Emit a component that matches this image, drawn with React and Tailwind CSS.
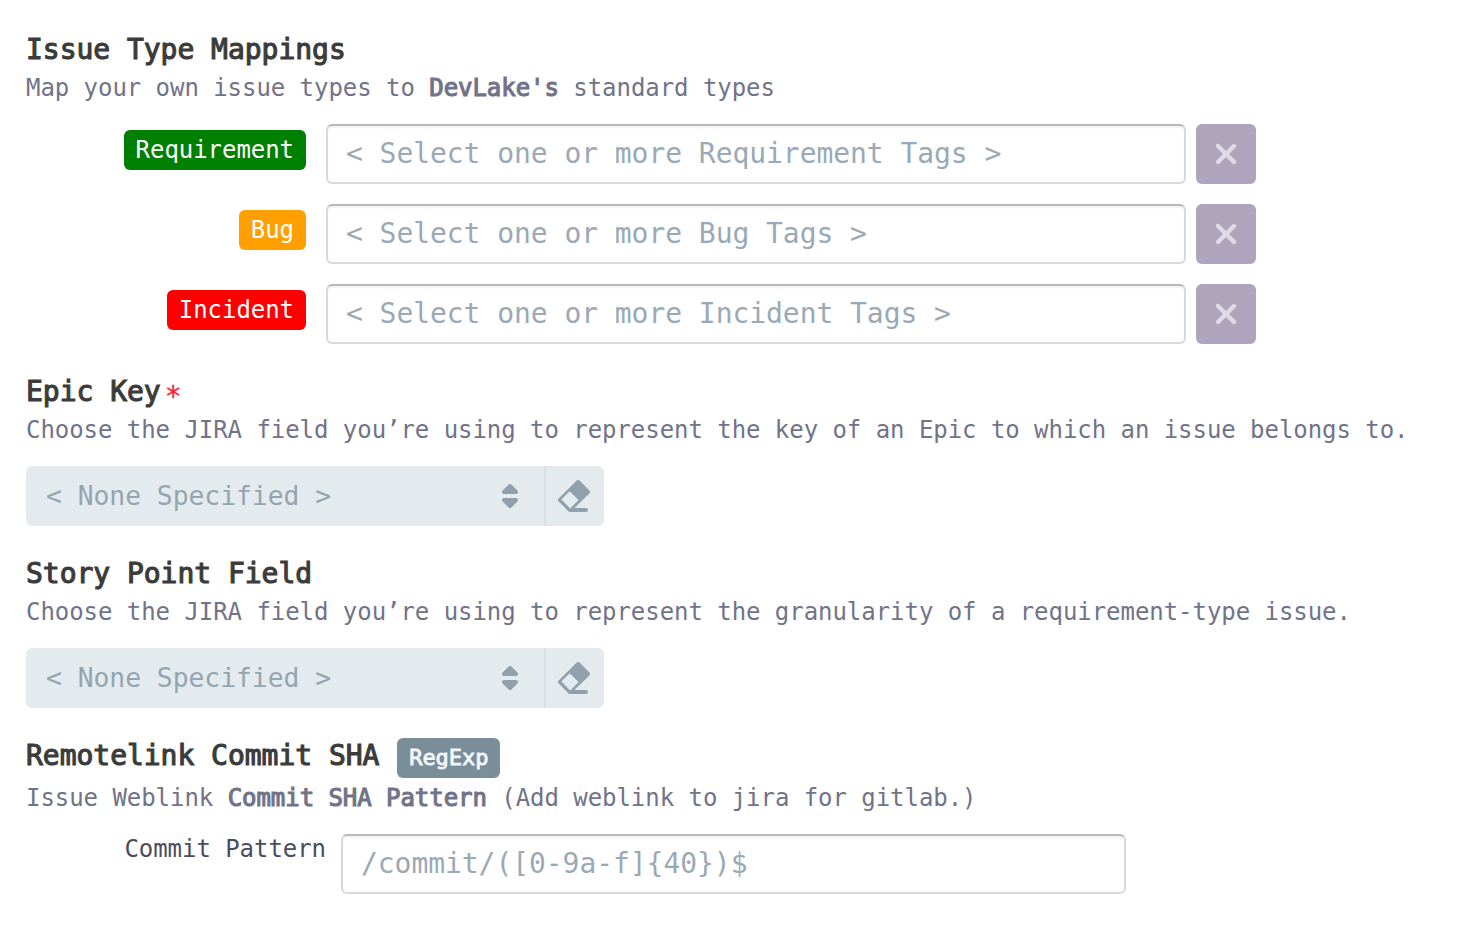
import React from "react";

function CrossIcon() {
  return (
    <svg width="32" height="32" viewBox="0 0 16 16" fill="#dfdbe5" stroke="#dfdbe5" strokeWidth="0.2">
      <path d="M9.41 8l3.29-3.29c.19-.18.3-.43.3-.71a1.003 1.003 0 00-1.71-.71L8 6.59l-3.29-3.3a1.003 1.003 0 00-1.42 1.42L6.59 8 3.3 11.29c-.19.18-.3.43-.3.71a1.003 1.003 0 001.71.71L8 9.41l3.29 3.29c.18.19.43.3.71.3a1.003 1.003 0 00.71-1.71L9.41 8z" />
    </svg>
  );
}

function CaretsIcon() {
  return (
    <svg width="32" height="32" viewBox="0 0 16 16" fill="#90a1ad">
      <path d="M5 7h6a1.003 1.003 0 00.71-1.71l-3-3C8.53 2.11 8.28 2 8 2s-.53.11-.71.29l-3 3A1.003 1.003 0 005 7zm6 2H5a1.003 1.003 0 00-.71 1.71l3 3c.18.18.43.29.71.29s.53-.11.71-.29l3-3A1.003 1.003 0 0011 9z" />
    </svg>
  );
}

function EraserIcon() {
  return (
    <svg width="32" height="32" viewBox="0 0 16 16" fill="#90a1ad" fillRule="evenodd">
      <path d="M9.4.3L.3 9.2a1 1 0 000 1.42l5 5.08c.18.18.43.3.7.3h8a1 1 0 000-2H8.2l7.5-7.3a1 1 0 000-1.42L10.8.3a1 1 0 00-1.4 0zM5.85 5.65l4.4 4.4L6.1 14.2 1.7 9.8z" />
    </svg>
  );
}

function Heading({ children }) {
  return (
    <h2 className="h-9 text-[28px] leading-9 tracking-[-0.03px] text-[#3b3b3b] whitespace-pre [-webkit-text-stroke:1.1px_#3b3b3b]">
      {children}
    </h2>
  );
}

function Strong({ children }) {
  return <span className="[-webkit-text-stroke:1.1px_#717389]">{children}</span>;
}

function Description({ children }) {
  return (
    <p className="h-8 text-2xl leading-8 tracking-[-0.048px] text-[#717389] whitespace-nowrap">{children}</p>
  );
}

const inputClass =
  "h-[60px] rounded-md border-2 border-[#d9d9d9] border-t-[#b9b9b9] bg-white pl-[18px] pb-0.5 text-[28px] tracking-[-0.056px] placeholder:text-[#9aa9b5] placeholder:opacity-100 shadow-[inset_0_2px_2px_rgba(16,22,26,0.05)] outline-none";

const mappings = [
  { name: "Requirement", color: "bg-[#008000]" },
  { name: "Bug", color: "bg-[#ffa000]" },
  { name: "Incident", color: "bg-[#ff0000]" },
];

function MappingRow({ name, color }) {
  return (
    <div className="flex">
      <div className="flex w-[280px] justify-end pt-1.5">
        <span className={"h-10 rounded-md px-3 text-2xl leading-10 tracking-[-0.048px] text-white " + color}>
          {name}
        </span>
      </div>
      <input
        className={"ml-5 w-[860px] " + inputClass}
        placeholder={"< Select one or more " + name + " Tags >"}
      />
      <button className="ml-2.5 flex h-[60px] w-[60px] items-center justify-center rounded-md bg-[#aea5bd]">
        <CrossIcon />
      </button>
    </div>
  );
}

function FieldSelect() {
  return (
    <div className="mt-5 flex h-[60px] w-[578px] overflow-hidden rounded-md bg-[#e3ebee]">
      <button className="flex w-[518px] items-center justify-between pl-5 pr-[18px] text-[26.4px] leading-8 tracking-[-0.053px] text-[#94a5b1]">
        <span>{"< None Specified >"}</span>
        <CaretsIcon />
      </button>
      <button className="flex w-[60px] items-center justify-center border-l-2 border-[#d5e0e7] pr-0.5">
        <EraserIcon />
      </button>
    </div>
  );
}

export default function App() {
  return (
    <main className="h-[938px] w-[1464px] overflow-hidden bg-white pl-[26px] pt-8 font-['DejaVu_Sans_Mono',monospace]">
      <section>
        <Heading>Issue Type Mappings</Heading>
        <div className="mt-1">
          <Description>
            Map your own issue types to <Strong>DevLake's</Strong> standard types
          </Description>
        </div>
        <div className="mt-5 flex flex-col gap-5">
          {mappings.map((m) => (
            <MappingRow key={m.name} {...m} />
          ))}
        </div>
      </section>

      <section className="mt-[30px]">
        <div className="flex h-9">
          <Heading>Epic Key</Heading>
          <span className="ml-1 pt-[5px] text-[28px] leading-9 text-[#ff1f35] [-webkit-text-stroke:0.3px_#ff1f35]">*</span>
        </div>
        <div className="mt-1">
          <Description>
            Choose the JIRA field you’re using to represent the key of an Epic to which an issue belongs to.
          </Description>
        </div>
        <FieldSelect />
      </section>

      <section className="mt-[30px]">
        <Heading>Story Point Field</Heading>
        <div className="mt-1">
          <Description>
            Choose the JIRA field you’re using to represent the granularity of a requirement-type issue.
          </Description>
        </div>
        <FieldSelect />
      </section>

      <section className="mt-[30px]">
        <div className="flex h-10">
          <Heading>Remotelink Commit SHA </Heading>
          <span className="ml-px h-10 rounded-md bg-[#7a8e9a] px-3 text-[22px] leading-[39px] tracking-[-0.044px] text-[#f5f8fa] [-webkit-text-stroke:0.8px_#f5f8fa]">
            RegExp
          </span>
        </div>
        <div className="mt-1">
          <Description>
            Issue Weblink <Strong>Commit SHA Pattern</Strong> (Add weblink to jira for gitlab.)
          </Description>
        </div>
        <div className="mt-5 flex">
          <label className="-mt-px w-[300px] text-right text-2xl leading-8 tracking-[-0.048px] text-[#4b4d5c]">
            Commit Pattern
          </label>
          <input className={"ml-[15px] w-[785px] " + inputClass} placeholder="/commit/([0-9a-f]{40})$" />
        </div>
      </section>
    </main>
  );
}
